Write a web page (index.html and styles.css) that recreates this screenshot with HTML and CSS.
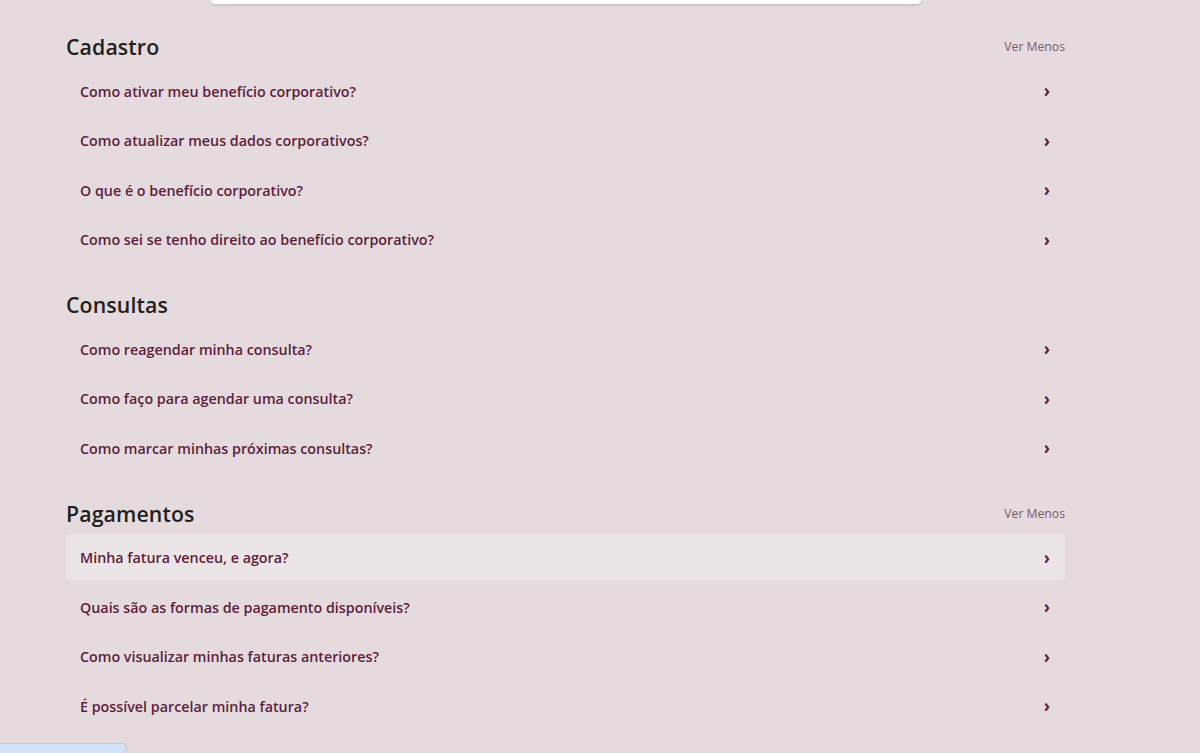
FILE: index.html
```html
<!DOCTYPE html>
<html lang="pt-BR">
<head>
  <meta charset="UTF-8">
  <title>Perguntas frequentes</title>
  <link rel="stylesheet" href="styles.css">
</head>
<body>

  <main class="faq">
    <div class="search-card"></div>

    <section class="faq-section">
      <div class="faq-header">
        <h2>Cadastro</h2>
        <a class="toggle" href="#">Ver Menos</a>
      </div>
      <ul class="faq-list">
        <li class="faq-item">Como ativar meu benefício corporativo?<span class="chevron">›</span></li>
        <li class="faq-item">Como atualizar meus dados corporativos?<span class="chevron">›</span></li>
        <li class="faq-item">O que é o benefício corporativo?<span class="chevron">›</span></li>
        <li class="faq-item">Como sei se tenho direito ao benefício corporativo?<span class="chevron">›</span></li>
      </ul>
    </section>

    <section class="faq-section">
      <div class="faq-header">
        <h2>Consultas</h2>
      </div>
      <ul class="faq-list">
        <li class="faq-item">Como reagendar minha consulta?<span class="chevron">›</span></li>
        <li class="faq-item">Como faço para agendar uma consulta?<span class="chevron">›</span></li>
        <li class="faq-item">Como marcar minhas próximas consultas?<span class="chevron">›</span></li>
      </ul>
    </section>

    <section class="faq-section">
      <div class="faq-header">
        <h2>Pagamentos</h2>
        <a class="toggle" href="#">Ver Menos</a>
      </div>
      <ul class="faq-list">
        <li class="faq-item active">Minha fatura venceu, e agora?<span class="chevron">›</span></li>
        <li class="faq-item">Quais são as formas de pagamento disponíveis?<span class="chevron">›</span></li>
        <li class="faq-item">Como visualizar minhas faturas anteriores?<span class="chevron">›</span></li>
        <li class="faq-item">É possível parcelar minha fatura?<span class="chevron">›</span></li>
      </ul>
    </section>
  </main>

  <div class="floating-tab"></div>

</body>
</html>
```

FILE: styles.css
```css
body {
  margin: 0;
  background: #e5dbdf;
  font-family: 'Open Sans', 'Noto Sans', sans-serif;
  color: #231f20;
  overflow: hidden;
}

.faq {
  width: 999px;
  margin-left: 66px;
}

.search-card {
  width: 710px;
  height: 4px;
  margin: 0 auto 27px;
  background: #ffffff;
  border-radius: 0 0 5px 5px;
  box-shadow: 0 1px 3px rgba(0,0,0,0.18);
}

.faq-section {
  margin-bottom: 27.5px;
}

.faq-header {
  display: flex;
  align-items: center;
  justify-content: space-between;
  box-sizing: border-box;
  height: 30px;
  padding-top: 1px;
  margin-bottom: 6px;
}

.faq-header h2 {
  margin: 0;
  font-size: 21.3px;
  font-weight: 600;
  letter-spacing: 0.1px;
  color: #231f20;
}

.toggle {
  font-size: 12.2px;
  color: #7a5a6c;
  text-decoration: none;
}

.faq-list {
  list-style: none;
  margin: 0;
  padding: 0;
  display: flex;
  flex-direction: column;
  gap: 3.5px;
}

.faq-item {
  display: flex;
  align-items: center;
  justify-content: space-between;
  box-sizing: border-box;
  height: 46px;
  padding: 2px 14px 0;
  border-radius: 4px;
  font-size: 14.3px;
  font-weight: 600;
  color: #5e1d3c;
  cursor: pointer;
}

.faq-item.active {
  background: #ece5e8;
}

.chevron {
  font-size: 17px;
  font-weight: 700;
  line-height: 1;
  margin-right: 1px;
  margin-top: -1px;
  color: #5e1d3c;
}

.floating-tab {
  position: fixed;
  left: 0;
  bottom: 0;
  width: 126px;
  height: 9px;
  background: #d3e2f8;
  border: 1px solid #c9c4d0;
  border-left: none;
  border-bottom: none;
  border-radius: 0 5px 0 0;
}
```
